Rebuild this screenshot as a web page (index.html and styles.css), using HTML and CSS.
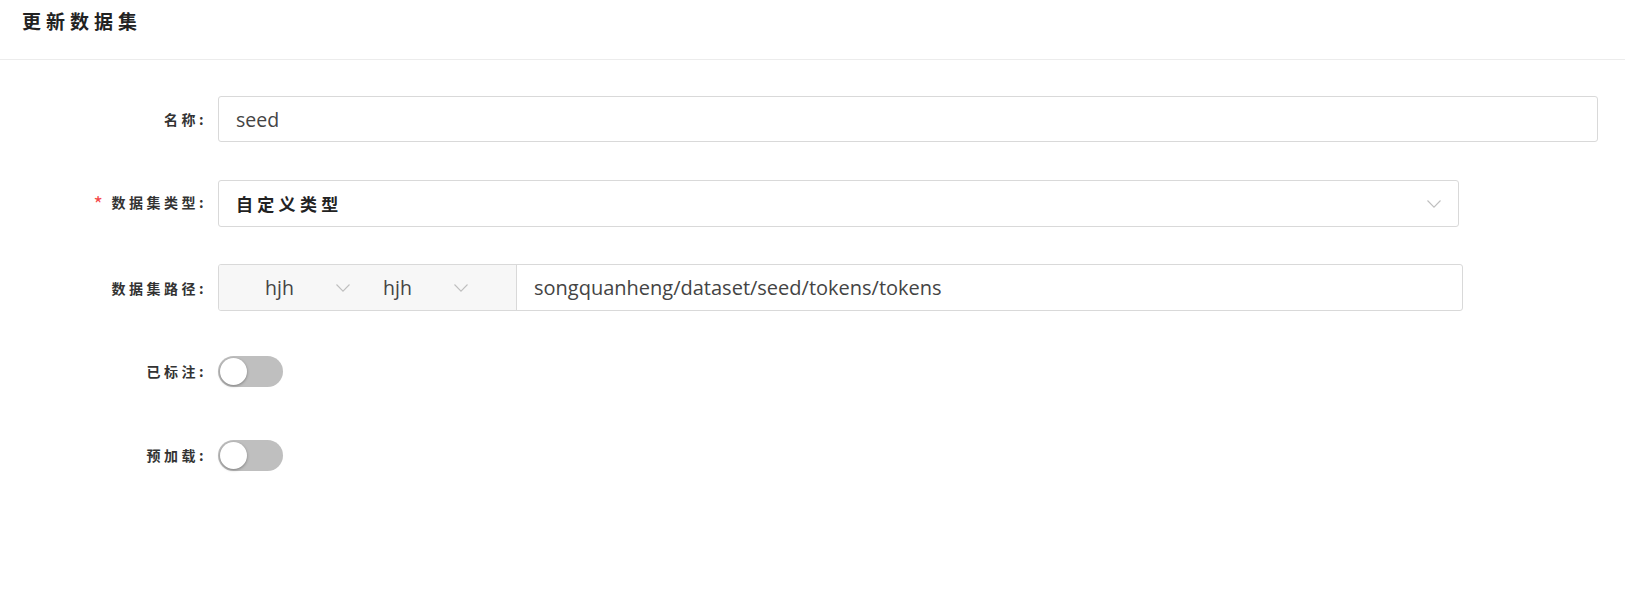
FILE: index.html
```html
<!DOCTYPE html>
<html lang="zh">
<head>
<meta charset="utf-8">
<title>更新数据集</title>
<link rel="stylesheet" href="styles.css">
</head>
<body>
<header class="page-header">
  <h1 class="page-title">更新数据集</h1>
</header>
<form class="form">
  <div class="form-row">
    <label class="form-label">名称:</label>
    <div class="form-control">
      <div class="input input-name">seed</div>
    </div>
  </div>
  <div class="form-row">
    <label class="form-label"><span class="required">*</span>数据集类型:</label>
    <div class="form-control">
      <div class="input select select-type">
        <span class="select-value">自定义类型</span>
        <svg class="chevron" width="14" height="8" viewBox="0 0 14 8"><path d="M0.5 0.5 L7 7.2 L13.5 0.5" fill="none" stroke="#bfbfbf" stroke-width="1.1"/></svg>
      </div>
    </div>
  </div>
  <div class="form-row">
    <label class="form-label">数据集路径:</label>
    <div class="form-control">
      <div class="input-group">
        <div class="addon">
          <div class="addon-select"><span>hjh</span><svg class="chevron" width="14" height="8" viewBox="0 0 14 8"><path d="M0.5 0.5 L7 7.2 L13.5 0.5" fill="none" stroke="#bfbfbf" stroke-width="1.1"/></svg></div>
          <div class="addon-select"><span>hjh</span><svg class="chevron" width="14" height="8" viewBox="0 0 14 8"><path d="M0.5 0.5 L7 7.2 L13.5 0.5" fill="none" stroke="#bfbfbf" stroke-width="1.1"/></svg></div>
        </div>
        <div class="group-input">songquanheng/dataset/seed/tokens/tokens</div>
      </div>
    </div>
  </div>
  <div class="form-row">
    <label class="form-label">已标注:</label>
    <div class="form-control">
      <span class="switch"><span class="thumb"></span></span>
    </div>
  </div>
  <div class="form-row">
    <label class="form-label">预加载:</label>
    <div class="form-control">
      <span class="switch"><span class="thumb"></span></span>
    </div>
  </div>
</form>
</body>
</html>
```

FILE: styles.css
```css
* { box-sizing: border-box; }
html, body { margin: 0; padding: 0; background: #fff; }
body {
  font-family: "Open Sans", "Noto Sans CJK SC", sans-serif;
  color: #333;
}
.page-header {
  height: 60px;
  border-bottom: 1px solid #ececec;
  padding: 0 22px;
  display: flex;
  align-items: center;
}
.page-title {
  margin: 0 0 18px 0;
  font-family: "Noto Sans CJK SC", sans-serif;
  font-size: 19px;
  font-weight: 700;
  letter-spacing: 5px;
  color: #222;
}
.form {
  padding-top: 36px;
  display: flex;
  flex-direction: column;
  gap: 38px;
}
.form-row {
  display: grid;
  grid-template-columns: 207px 1fr;
  column-gap: 11px;
  align-items: center;
  height: 46px;
}
.form-label {
  text-align: right;
  font-family: "Noto Sans CJK SC", sans-serif;
  font-size: 14px;
  font-weight: 700;
  letter-spacing: 3.5px;
  color: #333;
  white-space: nowrap;
}
.required {
  color: #f5484a;
  font-weight: 400;
  font-size: 20px;
  margin-right: 5px;
  vertical-align: -4px;
}
.form-control { display: flex; align-items: center; }
.input {
  height: 46px;
  border: 1px solid #d9d9d9;
  border-radius: 3px;
  padding: 0 17px;
  display: flex;
  align-items: center;
  font-size: 19.5px;
  color: #444;
}
.input-name { width: 1380px; }
.select-type {
  width: 1241px;
  height: 47px;
  justify-content: space-between;
}
.select-value {
  font-family: "Noto Sans CJK SC", sans-serif;
  font-weight: 700;
  font-size: 17px;
  letter-spacing: 4.3px;
  color: #222;
}
.chevron { display: block; flex: none; }
.input-group {
  width: 1245px;
  height: 47px;
  display: flex;
  border: 1px solid #d9d9d9;
  border-radius: 3px;
  overflow: hidden;
}
.addon {
  width: 298px;
  background: #f7f7f7;
  border-right: 1px solid #d9d9d9;
  display: flex;
  align-items: center;
  padding-left: 31px;
  font-size: 19.5px;
  color: #444;
}
.addon-select {
  width: 118px;
  display: flex;
  align-items: center;
  justify-content: space-between;
  padding: 0 18px 0 15px;
}
.group-input {
  flex: 1;
  display: flex;
  align-items: center;
  padding: 0 17px;
  font-size: 20px;
  color: #444;
}
.switch {
  position: relative;
  display: inline-block;
  width: 65px;
  height: 31px;
  border-radius: 16px;
  background: #bfbfbf;
}
.thumb {
  position: absolute;
  left: 2px;
  top: 2px;
  width: 27px;
  height: 27px;
  border-radius: 50%;
  background: #fff;
  box-shadow: 0 1px 3px rgba(0,0,0,0.35);
}
```
